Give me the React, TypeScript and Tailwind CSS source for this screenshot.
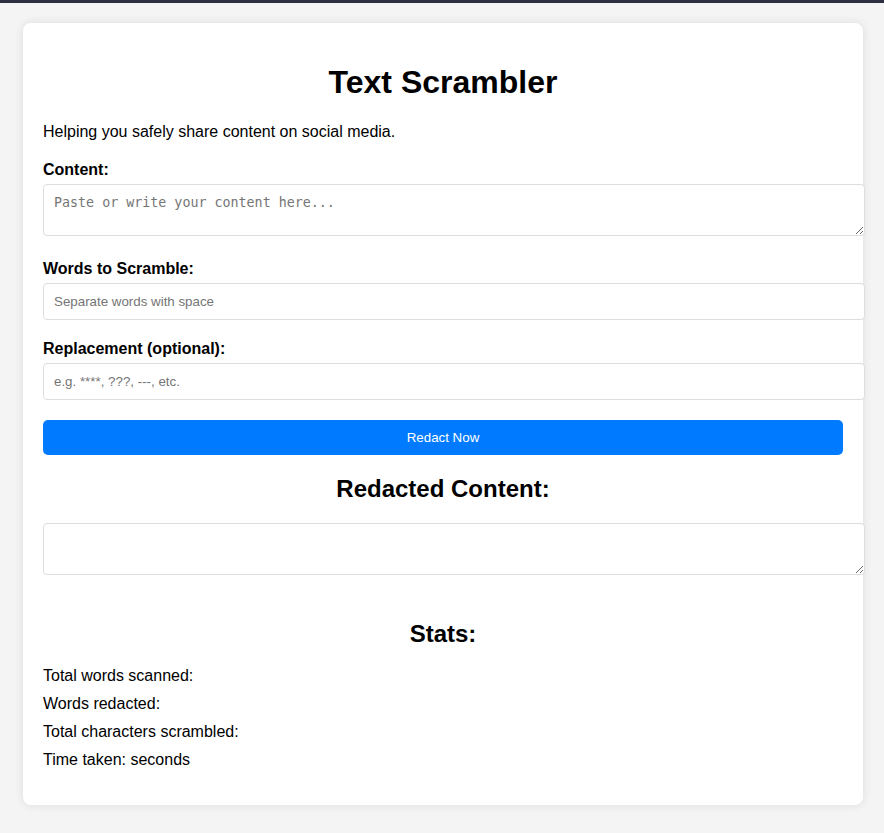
export default function App() {
  const sans = { fontFamily: '"Liberation Sans", Arial, sans-serif' };
  const field =
    'block w-[822px] rounded-[4px] border border-[#dddddd] bg-white px-[10px] py-[10px] text-[13.33px] leading-[15px] text-black outline-none';

  return (
    <div className="min-h-screen bg-[#f4f4f4]" style={sans}>
      <div className="h-[3px] bg-[#2c3040]" />
      <div className="mx-auto mt-5 w-[840px] translate-x-[1px] rounded-lg bg-white px-5 pt-5 pb-[36px] text-black shadow-[0_0_10px_rgba(0,0,0,0.1)]">
        <h1 className="mt-[21px] text-center text-[32px] font-bold leading-[37px]">Text Scrambler</h1>
        <p className="mt-[22px] text-base leading-[18px]">Helping you safely share content on social media.</p>

        <label className="mt-5 block text-base font-bold leading-[18px]">Content:</label>
        <textarea
          rows={2}
          placeholder="Paste or write your content here..."
          className={`${field} mt-[5px] h-[52px] placeholder:text-[#757575]`}
          style={{ fontFamily: '"DejaVu Sans Mono", monospace', fontSize: '13.33px' }}
        />

        <label className="mt-[24px] block text-base font-bold leading-[18px]">Words to Scramble:</label>
        <input
          type="text"
          placeholder="Separate words with space"
          className={`${field} mt-[5px] h-[37px] placeholder:text-[#757575]`}
        />

        <label className="mt-[20px] block text-base font-bold leading-[18px]">Replacement (optional):</label>
        <input
          type="text"
          placeholder="e.g. ****, ???, ---, etc."
          className={`${field} mt-[5px] h-[37px] placeholder:text-[#757575]`}
        />

        <button className="mt-5 block h-[35px] w-[800px] rounded-[5px] bg-[#007bff] text-[13.33px] text-white">
          Redact Now
        </button>

        <h2 className="mt-5 text-center text-2xl font-bold leading-[28px]">Redacted Content:</h2>
        <textarea rows={2} readOnly className={`${field} mt-5 h-[52px]`} />

        <h2 className="mt-[45px] text-center text-2xl font-bold leading-[28px]">Stats:</h2>
        <div className="mt-[19px] flex flex-col gap-[10px] text-base leading-[18px]">
          <p>Total words scanned: </p>
          <p>Words redacted: </p>
          <p>Total characters scrambled: </p>
          <p>Time taken:  seconds</p>
        </div>
      </div>
    </div>
  );
}
